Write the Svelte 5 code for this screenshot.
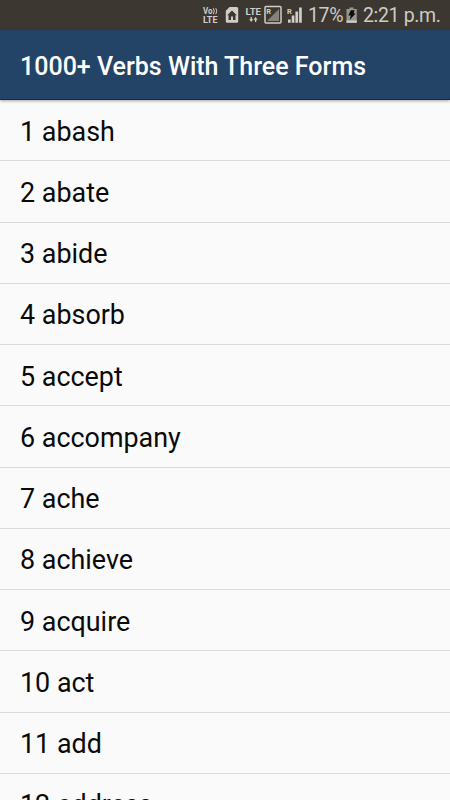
<script>
  const title = '1000+ Verbs With Three Forms';

  const verbs = [
    'abash',
    'abate',
    'abide',
    'absorb',
    'accept',
    'accompany',
    'ache',
    'achieve',
    'acquire',
    'act',
    'add',
    'address'
  ];
</script>

<div class="screen">
  <div class="status-bar">
    <svg class="icons" viewBox="0 0 105 30" aria-hidden="true">
      <!-- VoLTE -->
      <text class="volte" x="3" y="14.2" textLength="9.5" lengthAdjust="spacingAndGlyphs">Vo</text>
      <path class="wave" d="M13.3 8.2q1.9 3 0 6M15.8 8.2q1.9 3 0 6" />
      <text class="volte" x="3" y="22.9" textLength="14.5" lengthAdjust="spacingAndGlyphs">LTE</text>

      <!-- home app notification -->
      <path class="fill" fill-rule="evenodd" d="M29.5 7h7.2q1.5 0 1.5 1.5v12.8q0 1.5-1.5 1.5h-9.4q-1.5 0-1.5-1.5V10.7zM32 10.5l-4.8 4.8h1.3v4.7h7v-4.7h1.3z" />
      <path class="fill" d="M31 16.5h2V20h-2z" />

      <!-- LTE data -->
      <text class="lte" x="45.5" y="15.3" textLength="15.5" lengthAdjust="spacingAndGlyphs">LTE</text>
      <path class="fill" d="M50.5 17v2.3h-1.3l2 2.7 2-2.7h-1.3V17zM54.9 22v-2.3h-1.3l2-2.7 2 2.7h-1.3V22z" />

      <!-- first sim, roaming -->
      <rect class="frame" x="65" y="6.5" width="16" height="16.5" rx="1" />
      <path class="dim" d="M79 9v12H67z" />
      <text class="roam" x="66.3" y="14">R</text>

      <!-- second sim, roaming -->
      <text class="roam" x="87" y="13.5">R</text>
      <path class="fill" d="M88 19.5h2.7v3.3H88zM91.7 15.5h2.7v7.3h-2.7zM95.4 11.5h2.7v11.3h-2.7zM99.1 7.5h2.7v15.3h-2.7z" />
    </svg>
    <span class="percent">17%</span>
    <svg class="battery" viewBox="0 0 12 30" aria-hidden="true">
      <path class="cell" d="M3.5 7.5h4V9h3.3v13.5H.5V9h3z" />
      <path class="fill" d="M.5 20.5h10.3v2.3H.5z" />
      <path class="bolt" d="M4.8 10.3h3.8l-1 3.2h2L3.6 20l1.2-4.4H2.3z" />
    </svg>
    <span class="time">2:21 p.m.</span>
  </div>

  <header>
    <h1>{title}</h1>
  </header>

  <ul>
    {#each verbs as verb, i}
      <li>{i + 1} {verb}</li>
    {/each}
  </ul>
</div>

<style>
  :global(body) {
    overflow: hidden;
  }

  .screen {
    display: flex;
    flex-direction: column;
    height: 100vh;
    overflow: hidden;
    background: #fafafa;
    font-family: Roboto, sans-serif;
  }

  .status-bar {
    display: flex;
    flex: none;
    height: 30px;
    padding-left: 200px;
    background: #3c3831;
    color: #cecbc6;
    font-size: 19.5px;
    letter-spacing: -0.35px;
    line-height: 32px;
    white-space: nowrap;
  }

  .icons {
    flex: none;
    width: 105px;
    height: 30px;
    letter-spacing: 0;
  }

  .percent {
    width: 38px;
    margin-left: 3px;
  }

  .battery {
    flex: none;
    width: 12px;
    height: 30px;
  }

  .time {
    margin-left: 5px;
  }

  .fill {
    fill: #d0cdc8;
  }

  .dim {
    fill: #85827c;
  }

  .cell {
    fill: #989590;
  }

  .bolt {
    fill: #0c0b09;
  }

  .frame {
    fill: none;
    stroke: #d0cdc8;
    stroke-width: 1.5;
  }

  .wave {
    fill: none;
    stroke: #d0cdc8;
    stroke-width: 1;
  }

  .volte {
    fill: #d0cdc8;
    font-size: 8.6px;
    font-weight: 700;
  }

  .lte {
    fill: #d0cdc8;
    font-size: 8.8px;
    font-weight: 700;
  }

  .roam {
    fill: #d0cdc8;
    font-size: 7.5px;
    font-weight: 700;
  }

  header {
    display: flex;
    flex: none;
    align-items: center;
    box-sizing: border-box;
    height: 70px;
    padding: 4px 20px 0;
    border-bottom: 1px solid #0b2b57;
    background: #234467;
    box-shadow: 0 1px 3px rgba(0, 0, 0, 0.35);
    z-index: 1;
  }

  h1 {
    margin: 0;
    color: #fff;
    font-size: 25px;
    font-weight: 500;
    white-space: nowrap;
  }

  ul {
    flex: none;
    margin: 0;
    padding: 0;
    list-style: none;
  }

  li {
    box-sizing: border-box;
    height: 61.25px;
    padding: 0.55px 0 0 20px;
    border-bottom: 1px solid #dadada;
    color: #0a0a0a;
    font-size: 26.9px;
    line-height: 63px;
  }
</style>
